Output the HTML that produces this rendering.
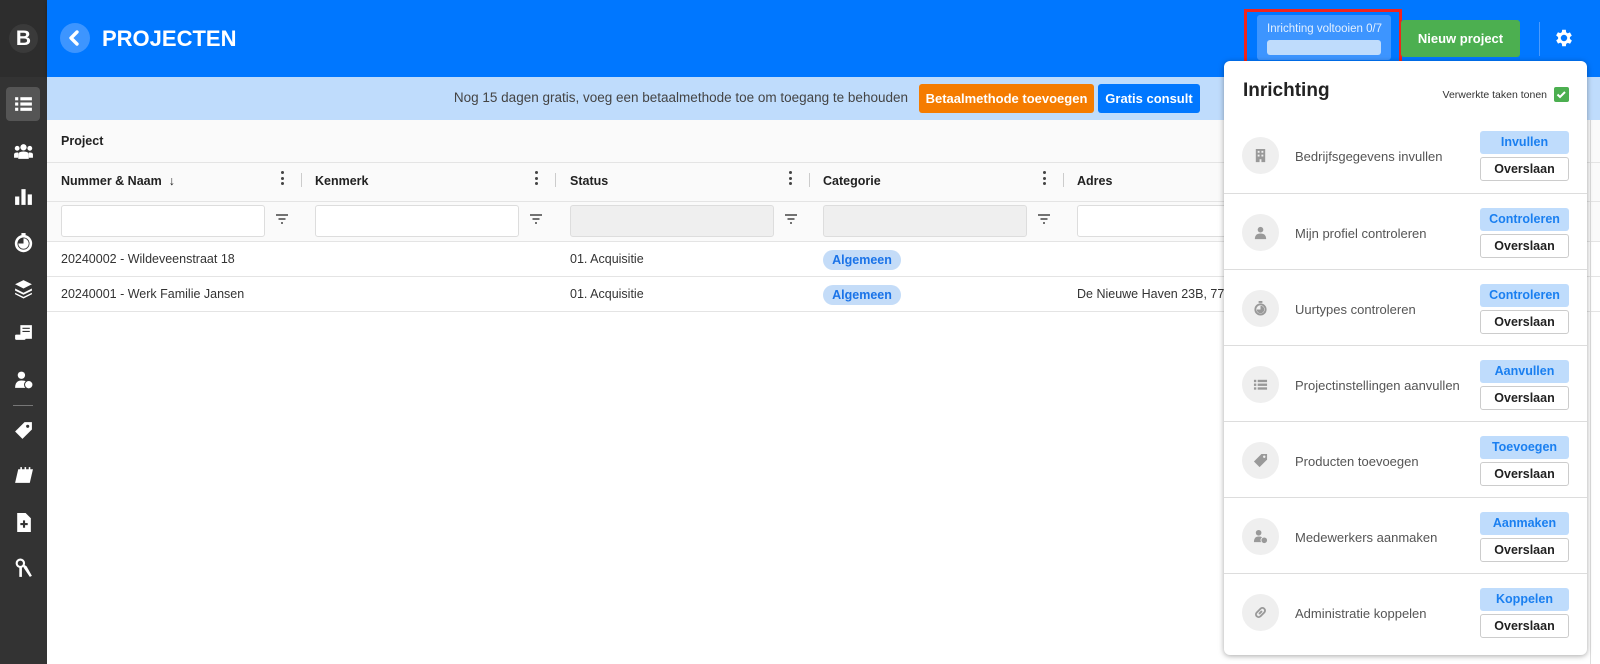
<!DOCTYPE html>
<html><head><meta charset="utf-8"><style>
*{box-sizing:border-box;margin:0;padding:0}
body{width:1600px;height:664px;overflow:hidden;font-family:"Liberation Sans",sans-serif;background:#fff;position:relative;color:#333}
.abs{position:absolute}
#side{left:0;top:0;width:47px;height:664px;background:#333}
#logo{left:0;top:0;width:47px;height:77px;background:#2d2d2d}
.si{position:absolute;left:13px;width:21px;height:21px;fill:#fff}
#hdr{left:47px;top:0;width:1553px;height:77px;background:#0077ff;box-shadow:0 2px 4px rgba(0,0,0,.2)}
#ban{left:47px;top:77px;width:1553px;height:43px;background:#bfdcfc}
.btn{position:absolute;border-radius:3px;color:#fff;font-weight:bold;font-size:13px;text-align:center}
.th{position:absolute;font-size:12.5px;font-weight:bold;color:#222}
.td{position:absolute;font-size:12.5px;color:#333}
.line{position:absolute;left:47px;width:1553px;height:1px;background:#e4e4e4}
.inp{position:absolute;top:205px;height:32px;width:204px;border:1px solid #ddd;border-radius:3px;background:#fff}
.fi{position:absolute;top:212px;width:14px;height:14px}
.dots{position:absolute;top:171px;width:4px}
.dots i{display:block;width:3px;height:3px;border-radius:50%;background:#444;margin-bottom:2.5px}
.vs{position:absolute;top:173px;width:1px;height:14px;background:#ccc}
.pill{position:absolute;width:78px;height:20px;border-radius:10px;background:#c4dcf8;color:#1a73e8;font-weight:bold;font-size:12.5px;text-align:center;line-height:20px}
#panel{left:1224px;top:61px;width:363px;height:594px;background:#fff;border-radius:6px;box-shadow:0 1px 6px rgba(0,0,0,.35)}
.row{position:absolute;left:0;width:363px;height:76px;border-top:1px solid #ddd}
.circ{position:absolute;left:18px;top:20px;width:37px;height:37px;border-radius:50%;background:#efefef}
.circ svg{position:absolute;left:11px;top:11px;width:15px;height:15px;fill:#999}
.rt{position:absolute;left:71px;top:32px;font-size:13px;color:#555}
.b1{position:absolute;left:256px;top:14px;width:89px;height:23px;background:#bfdcfc;border-radius:3px;color:#1a7ff0;font-weight:bold;font-size:12.5px;text-align:center;line-height:23px}
.b2{position:absolute;left:256px;top:40px;width:89px;height:24px;border:1px solid #ccc;border-radius:3px;color:#222;font-weight:bold;font-size:12.5px;text-align:center;line-height:22px}
</style></head><body>
<div id="side" class="abs"></div>
<div id="logo" class="abs"><div class="abs" style="left:9px;top:24px;width:29px;height:29px;border-radius:50%;background:#3a3a3a;color:#fff;font-weight:900;font-size:21px;text-align:center;line-height:29px">B</div></div>
<div class="abs" style="left:6px;top:87px;width:34px;height:34px;border-radius:4px;background:#555"></div>
<svg class="si" style="top:93px" viewBox="0 0 20 20"><rect x="2" y="4" width="3" height="3"/><rect x="7" y="4" width="11" height="3"/><rect x="2" y="9" width="3" height="3"/><rect x="7" y="9" width="11" height="3"/><rect x="2" y="14" width="3" height="3"/><rect x="7" y="14" width="11" height="3"/></svg>
<svg class="si" style="top:141px" viewBox="0 0 20 20"><circle cx="10" cy="6" r="3"/><circle cx="4" cy="7" r="2.3"/><circle cx="16" cy="7" r="2.3"/><path d="M5 17v-4q0-3 5-3t5 3v4z"/><path d="M1 16v-3q0-2 3-2l1 0v5z"/><path d="M19 16v-3q0-2-3-2l-1 0v5z"/></svg>
<svg class="si" style="top:186px" viewBox="0 0 20 20"><rect x="2" y="10" width="4" height="8"/><rect x="8" y="3" width="4" height="15"/><rect x="14" y="8" width="4" height="10"/></svg>
<svg class="si" style="top:232px" viewBox="0 0 20 20"><rect x="8" y="1" width="4" height="2"/><circle cx="10" cy="11" r="7" fill="none" stroke="#fff" stroke-width="2.5"/><path d="M10 11V6a5 5 0 1 1-5 5z"/></svg>
<svg class="si" style="top:278px" viewBox="0 0 20 20"><path d="M10 2l8 4-8 4-8-4z"/><path d="M2 10l8 4 8-4v2l-8 4-8-4z"/><path d="M2 14l8 4 8-4v1.5l-8 4-8-4z"/></svg>
<svg class="si" style="top:322px" viewBox="0 0 20 20"><path d="M7 3h11v13h-11z"/><path d="M9 6h7M9 9h7" stroke="#333" stroke-width="1"/><rect x="2" y="12" width="10" height="5" rx="1"/></svg>
<svg class="si" style="top:370px" viewBox="0 0 20 20"><circle cx="8" cy="5" r="3.5"/><path d="M2 17q0-7 6-7t6 3v4z"/><circle cx="15" cy="14" r="4" stroke="#333" stroke-width="1"/></svg>
<div class="abs" style="left:13px;top:405px;width:20px;height:1px;background:#777"></div>
<svg class="si" style="top:420px" viewBox="0 0 20 20"><path d="M11 2h7v7l-9 9-7-7z"/><circle cx="14" cy="6" r="1.5" fill="#333"/></svg>
<svg class="si" style="top:465px" viewBox="0 0 20 20"><path d="M5 4h14l-3 13H2z"/><rect x="7" y="2" width="1.5" height="3"/><rect x="11" y="2" width="1.5" height="3"/><rect x="15" y="2" width="1.5" height="3"/></svg>
<svg class="si" style="top:512px" viewBox="0 0 20 20"><path d="M4 1h8l5 5v13H4z"/><rect x="9.5" y="8" width="2" height="7" fill="#333"/><rect x="7" y="10.5" width="7" height="2" fill="#333"/></svg>
<svg class="si" style="top:558px" viewBox="0 0 20 20"><circle cx="7" cy="5" r="3.5" fill="none" stroke="#fff" stroke-width="2"/><path d="M6 8v10h2.5v-10z"/><path d="M10 6l3 2 5 9-2 1-6-9z"/></svg>

<div id="hdr" class="abs"></div>
<div class="abs" style="left:60px;top:23px;width:30px;height:30px;border-radius:50%;background:#3d95ff"></div>
<svg class="abs" style="left:66px;top:29px;width:18px;height:18px" viewBox="0 0 18 18"><path d="M11 3L5 9l6 6" fill="none" stroke="#fff" stroke-width="3.4" stroke-linecap="round" stroke-linejoin="round"/></svg>
<div class="abs" style="left:102px;top:26px;color:#fff;font-weight:900;font-size:22px;letter-spacing:0px">PROJECTEN</div>
<div class="abs" style="left:1244px;top:9px;width:158px;height:56px;border:3px solid #f2241b"></div>
<div class="abs" style="left:1257px;top:15px;width:134px;height:45px;background:#3d95ff;border-radius:3px"><div style="position:absolute;left:10px;top:8px;font-size:11.5px;color:#e2efff;white-space:nowrap">Inrichting voltooien 0/7</div><div style="position:absolute;left:10px;top:25px;width:114px;height:15px;background:#bfdcfc;border-radius:3px"></div></div>
<div class="btn" style="left:1401px;top:20px;width:119px;height:37px;background:#4caf50;line-height:37px">Nieuw project</div>
<div class="abs" style="left:1539px;top:22px;width:1px;height:34px;background:#4a9bff"></div>
<svg class="abs" style="left:1553px;top:27px;width:22px;height:22px" viewBox="0 0 24 24"><path fill="#fff" d="M19.4 13a7.6 7.6 0 0 0 0-2l2.1-1.6-2-3.5-2.5 1a7 7 0 0 0-1.7-1L15 3h-4l-.4 2.7a7 7 0 0 0-1.7 1l-2.5-1-2 3.5L6.6 11a7.6 7.6 0 0 0 0 2l-2.1 1.6 2 3.5 2.5-1a7 7 0 0 0 1.7 1L11 21h4l.4-2.7a7 7 0 0 0 1.7-1l2.5 1 2-3.5zM13 15.5a3.5 3.5 0 1 1 0-7 3.5 3.5 0 0 1 0 7z" transform="translate(-1 0)"/></svg>

<div id="ban" class="abs"></div>
<div class="abs" style="right:692px;top:90px;font-size:13.5px;color:#444;white-space:nowrap">Nog 15 dagen gratis, voeg een betaalmethode toe om toegang te behouden</div>
<div class="btn" style="left:919px;top:84px;width:175px;height:29px;background:#f57c00;line-height:29px">Betaalmethode toevoegen</div>
<div class="btn" style="left:1098px;top:84px;width:102px;height:29px;background:#0077ff;line-height:29px">Gratis consult</div>

<div class="abs" style="left:47px;top:120px;width:1553px;height:121px;background:#fafafa"></div>
<div class="line" style="top:162px"></div>
<div class="line" style="top:201px"></div>
<div class="line" style="top:241px"></div>
<div class="line" style="top:276px"></div>
<div class="line" style="top:311px"></div>
<div class="th" style="left:61px;top:134px">Project</div>
<div class="th" style="left:61px;top:174px">Nummer &amp; Naam &nbsp;↓</div>
<div class="th" style="left:315px;top:174px">Kenmerk</div>
<div class="th" style="left:570px;top:174px">Status</div>
<div class="th" style="left:823px;top:174px">Categorie</div>
<div class="th" style="left:1077px;top:174px">Adres</div>
<div class="dots" style="left:281px"><i></i><i></i><i></i></div>
<div class="dots" style="left:535px"><i></i><i></i><i></i></div>
<div class="dots" style="left:789px"><i></i><i></i><i></i></div>
<div class="dots" style="left:1043px"><i></i><i></i><i></i></div>
<div class="vs" style="left:301px"></div><div class="vs" style="left:555px"></div><div class="vs" style="left:809px"></div><div class="vs" style="left:1063px"></div>
<div class="inp" style="left:61px"></div>
<div class="inp" style="left:315px"></div>
<div class="inp" style="left:570px;background:#efefef"></div>
<div class="inp" style="left:823px;background:#efefef"></div>
<div class="inp" style="left:1077px;width:160px"></div>
<svg class="fi" style="left:275px" viewBox="0 0 14 14"><path d="M1 3h12M3.5 7h7M6 11h2" stroke="#444" stroke-width="1.4"/></svg>
<svg class="fi" style="left:529px" viewBox="0 0 14 14"><path d="M1 3h12M3.5 7h7M6 11h2" stroke="#444" stroke-width="1.4"/></svg>
<svg class="fi" style="left:784px" viewBox="0 0 14 14"><path d="M1 3h12M3.5 7h7M6 11h2" stroke="#444" stroke-width="1.4"/></svg>
<svg class="fi" style="left:1037px" viewBox="0 0 14 14"><path d="M1 3h12M3.5 7h7M6 11h2" stroke="#444" stroke-width="1.4"/></svg>
<div class="td" style="left:61px;top:252px">20240002 - Wildeveenstraat 18</div>
<div class="td" style="left:570px;top:252px">01. Acquisitie</div>
<div class="pill" style="left:823px;top:250px">Algemeen</div>
<div class="td" style="left:61px;top:287px">20240001 - Werk Familie Jansen</div>
<div class="td" style="left:570px;top:287px">01. Acquisitie</div>
<div class="pill" style="left:823px;top:285px">Algemeen</div>
<div class="td" style="left:1077px;top:287px">De Nieuwe Haven 23B, 7772</div>
<div class="abs" style="left:1590px;top:120px;width:1px;height:544px;background:#ddd"></div>

<div id="panel" class="abs">
<div class="abs" style="left:19px;top:19px;font-size:19px;font-weight:bold;color:#222">Inrichting</div>
<div class="abs" style="right:40px;top:28px;font-size:10.5px;color:#333;white-space:nowrap">Verwerkte taken tonen</div>
<div class="abs" style="left:330px;top:26px;width:15px;height:15px;background:#4caf50;border-radius:2px"><svg style="position:absolute;left:2px;top:2px" width="11" height="11" viewBox="0 0 11 11"><path d="M1.5 5.5l2.5 2.5 5-5" fill="none" stroke="#fff" stroke-width="2"/></svg></div>

<div class="row" style="top:56px;border-top:none"><div class="circ"><svg viewBox="0 0 16 16"><path d="M3 1h10v14H3zM5 3v2h2V3zm4 0v2h2V3zM5 7v2h2V7zm4 0v2h2V7zM7 12v3h2v-3z" fill-rule="evenodd"/></svg></div><div class="rt">Bedrijfsgegevens invullen</div><div class="b1">Invullen</div><div class="b2">Overslaan</div></div>
<div class="row" style="top:132px"><div class="circ"><svg viewBox="0 0 16 16"><circle cx="8" cy="5" r="3"/><path d="M2 15q0-6 6-6t6 6z"/></svg></div><div class="rt">Mijn profiel controleren</div><div class="b1">Controleren</div><div class="b2">Overslaan</div></div>
<div class="row" style="top:208px"><div class="circ"><svg viewBox="0 0 16 16"><rect x="6" y="0" width="4" height="2"/><circle cx="8" cy="9" r="5.5" fill="none" stroke="#999" stroke-width="2"/><path d="M8 9V5a4 4 0 1 1-4 4z"/></svg></div><div class="rt">Uurtypes controleren</div><div class="b1">Controleren</div><div class="b2">Overslaan</div></div>
<div class="row" style="top:284px"><div class="circ"><svg viewBox="0 0 16 16"><rect x="1" y="3" width="2.5" height="2.5"/><rect x="5" y="3" width="10" height="2.5"/><rect x="1" y="7" width="2.5" height="2.5"/><rect x="5" y="7" width="10" height="2.5"/><rect x="1" y="11" width="2.5" height="2.5"/><rect x="5" y="11" width="10" height="2.5"/></svg></div><div class="rt">Projectinstellingen aanvullen</div><div class="b1">Aanvullen</div><div class="b2">Overslaan</div></div>
<div class="row" style="top:360px"><div class="circ"><svg viewBox="0 0 16 16"><path d="M9 1h6v6l-8 8-6-6z"/><circle cx="12" cy="4" r="1.3" fill="#efefef"/></svg></div><div class="rt">Producten toevoegen</div><div class="b1">Toevoegen</div><div class="b2">Overslaan</div></div>
<div class="row" style="top:436px"><div class="circ"><svg viewBox="0 0 16 16"><circle cx="6" cy="4" r="3"/><path d="M1 14q0-6 5-6t5 3v3z"/><circle cx="12" cy="12" r="3.5" stroke="#efefef"/></svg></div><div class="rt">Medewerkers aanmaken</div><div class="b1">Aanmaken</div><div class="b2">Overslaan</div></div>
<div class="row" style="top:512px"><div class="circ"><svg viewBox="0 0 16 16"><path d="M7 9l2-2M6 6l2-2a2.5 2.5 0 0 1 4 4l-2 2M10 10l-2 2a2.5 2.5 0 0 1-4-4l2-2" fill="none" stroke="#999" stroke-width="2" stroke-linecap="round"/></svg></div><div class="rt">Administratie koppelen</div><div class="b1">Koppelen</div><div class="b2">Overslaan</div></div>
</div>
</body></html>
